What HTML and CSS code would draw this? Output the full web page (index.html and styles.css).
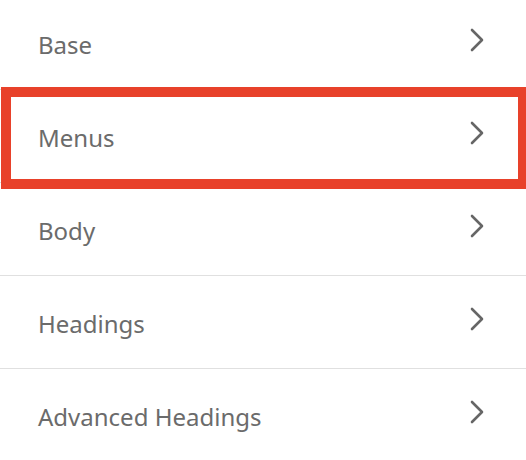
FILE: index.html
```html
<!DOCTYPE html>
<html>
<head>
<meta charset="utf-8">
<link rel="stylesheet" href="styles.css">
</head>
<body>
<ul class="menu">
  <li class="row"><span class="label">Base</span><svg class="chev" viewBox="0 0 14 24" width="14" height="24"><polyline points="2,2 12,12 2,22"/></svg></li>
  <li class="row row-selected"><span class="label">Menus</span><svg class="chev" viewBox="0 0 14 24" width="14" height="24"><polyline points="2,2 12,12 2,22"/></svg></li>
  <li class="row"><span class="label">Body</span><svg class="chev" viewBox="0 0 14 24" width="14" height="24"><polyline points="2,2 12,12 2,22"/></svg></li>
  <li class="row"><span class="label">Headings</span><svg class="chev" viewBox="0 0 14 24" width="14" height="24"><polyline points="2,2 12,12 2,22"/></svg></li>
  <li class="row"><span class="label">Advanced Headings</span><svg class="chev" viewBox="0 0 14 24" width="14" height="24"><polyline points="2,2 12,12 2,22"/></svg></li>
</ul>
</body>
</html>
```
FILE: styles.css
```css
html, body {
  margin: 0;
  padding: 0;
  background: #ffffff;
  overflow: hidden;
}
.menu {
  list-style: none;
  margin: -3px 0 0 0;
  padding: 0;
}
.row {
  position: relative;
  height: 92px;
  border-bottom: 1px solid #e0e0e0;
  display: flex;
  align-items: center;
  justify-content: space-between;
  padding: 0 42px 0 38px;
  font-family: "Noto Sans", "DejaVu Sans", sans-serif;
  font-size: 24px;
  color: #6b6b6b;
}
.label {
  position: relative;
  top: 1px;
}
.chev {
  display: block;
  margin-top: -6px;
  fill: none;
  stroke: #666666;
  stroke-width: 2.6;
  stroke-linecap: round;
  stroke-linejoin: round;
}
.row-selected::after {
  content: "";
  position: absolute;
  left: 1px;
  right: 0;
  top: -3px;
  bottom: -7px;
  border: 10px solid #e8412a;
  border-right-width: 8px;
}
```
